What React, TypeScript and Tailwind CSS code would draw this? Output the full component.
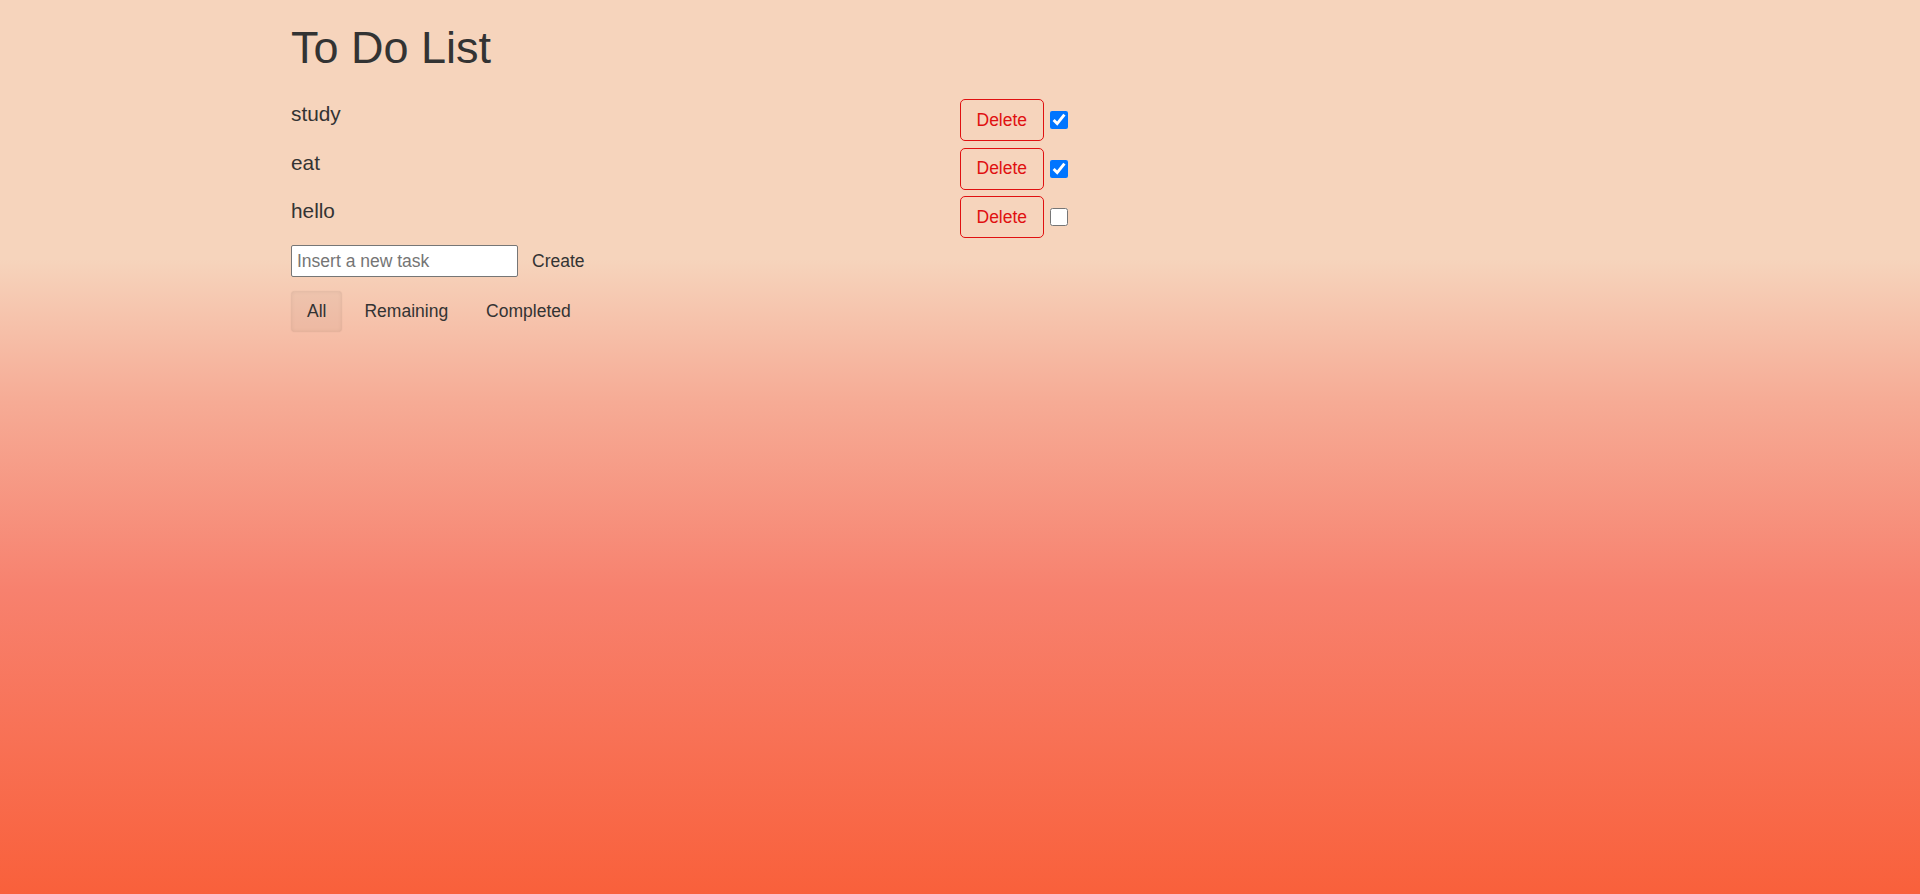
import React, { useState } from "react";

type Task = { id: number; name: string; done: boolean };

export default function App() {
  const [tasks, setTasks] = useState<Task[]>([
    { id: 1, name: "study", done: true },
    { id: 2, name: "eat", done: true },
    { id: 3, name: "hello", done: false },
  ]);
  const [filter, setFilter] = useState("All");

  return (
    <div
      className="min-h-[894px] w-full bg-[linear-gradient(to_bottom,#f6d4bc_0%,#f6d4bc_29%,#f6ab95_45%,#f7816e_66%,#f9603b_100%)] text-[#333]"
      style={{ fontFamily: '"Liberation Sans", Arial, sans-serif' }}
    >
      <div className="w-[1338px] mx-auto pt-[23px]">
        <h1 className="text-[45px] leading-[50px] font-normal text-[#333]">To Do List</h1>
        <ul className="mt-[26px] flex flex-col gap-[6.5px]">
          {tasks.map((t) => (
            <li key={t.id} className="flex items-start">
              <span className="w-[669px] text-[20.8px] leading-[23px] mt-[3px]">{t.name}</span>
              <div className="flex items-center">
                <button
                  className="h-[42px] px-[15.5px] text-[17.5px] text-[#e01010] border border-[#e01010] rounded-[5px] bg-transparent"
                  onClick={() => setTasks(tasks.filter((x) => x.id !== t.id))}
                >
                  Delete
                </button>
                <input
                  type="checkbox"
                  checked={t.done}
                  onChange={() =>
                    setTasks(tasks.map((x) => (x.id === t.id ? { ...x, done: !x.done } : x)))
                  }
                  className="ml-[6px] w-[18px] h-[18px] accent-[#0075ff]"
                />
              </div>
            </li>
          ))}
        </ul>
        <div className="mt-[7px] flex items-center">
          <input
            type="text"
            placeholder="Insert a new task"
            className="w-[227px] h-[32px] px-[5px] text-[17.5px] bg-white border border-[#767676] rounded-[2px] placeholder:text-[#757575] outline-none"
          />
          <button className="ml-[5px] px-[9px] text-[17.5px] text-[#333] bg-transparent">Create</button>
        </div>
        <div className="mt-[14px] flex gap-[6px]">
          {["All", "Remaining", "Completed"].map((f) => (
            <button
              key={f}
              onClick={() => setFilter(f)}
              className={
                f === filter
                  ? "h-[41px] px-[16px] text-[17.5px] text-[#333] rounded-[4px] bg-[rgba(0,0,0,0.03)] shadow-[inset_0_0_4px_rgba(0,0,0,0.08),0_0_2px_rgba(0,0,0,0.06)]"
                  : "h-[41px] px-[16px] text-[17.5px] text-[#333] rounded-[4px] bg-transparent"
              }
            >
              {f}
            </button>
          ))}
        </div>
      </div>
    </div>
  );
}
